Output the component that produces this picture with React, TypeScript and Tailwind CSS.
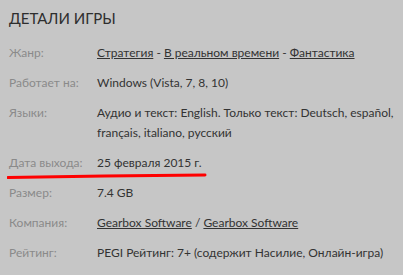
const rows: { label: string; value: React.ReactNode }[] = [
  {
    label: 'Жанр:',
    value: (
      <>
        <a className="underline">Стратегия</a> - <a className="underline">В реальном времени</a> -{' '}
        <a className="underline">Фантастика</a>
      </>
    ),
  },
  { label: 'Работает на:', value: 'Windows (Vista, 7, 8, 10)' },
  {
    label: 'Языки:',
    value: 'Аудио и текст: English. Только текст: Deutsch, español, français, italiano, русский',
  },
  { label: 'Дата выхода:', value: '25 февраля 2015 г.' },
  { label: 'Размер:', value: '7.4 GB' },
  {
    label: 'Компания:',
    value: (
      <>
        <a className="underline">Gearbox Software</a> / <a className="underline">Gearbox Software</a>
      </>
    ),
  },
  { label: 'Рейтинг:', value: 'PEGI Рейтинг: 7+ (содержит Насилие, Онлайн-игра)' },
];

export default function App() {
  return (
    <div className="h-[275px] w-[403px] overflow-hidden bg-[#c6c6c6] px-[9px] pt-[8px] font-['Lato',sans-serif]">
      <h2 className="text-[15px] leading-5 text-[#2e2e2e]">ДЕТАЛИ ИГРЫ</h2>
      <dl className="mt-[10px] flex flex-col">
        {rows.map((row) => (
          <div key={row.label} className="relative flex py-[5px] text-[12px] leading-5">
            <dt className="w-[88px] shrink-0 text-[#8a8a8a]">{row.label}</dt>
            <dd className="text-[#333]">{row.value}</dd>
            {/* red underline stroke under the release date */}
            {row.label === 'Дата выхода:' && (
              <svg className="absolute left-[-2px] top-[25px]" width="202" height="8" viewBox="0 0 202 8">
                <path d="M1 4.5 C60 3.5 140 2.5 198 2" stroke="#ff0000" strokeWidth="3" fill="none" strokeLinecap="round" />
              </svg>
            )}
          </div>
        ))}
      </dl>
    </div>
  );
}
